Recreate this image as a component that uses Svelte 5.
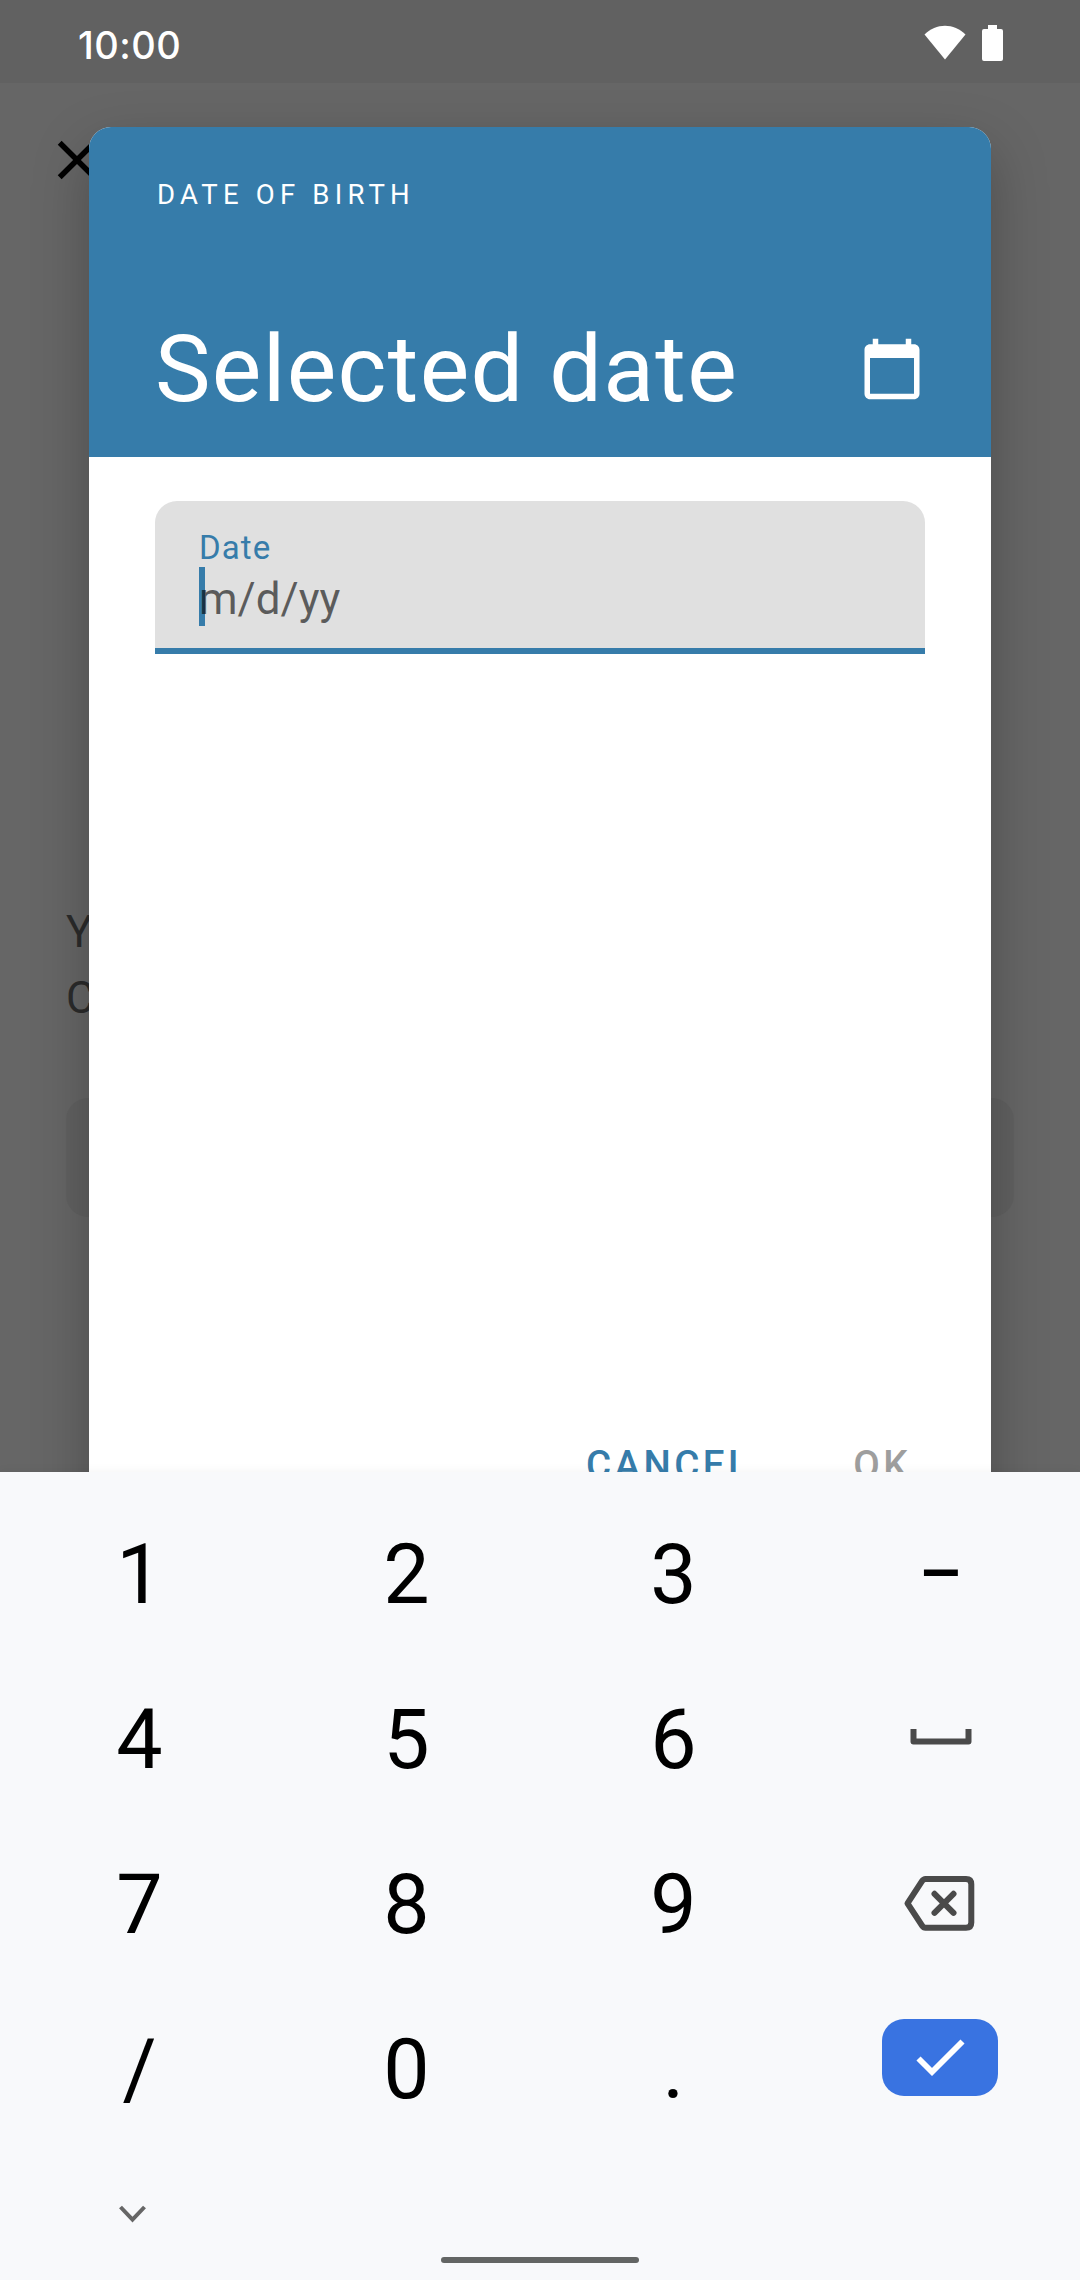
<script>
  const rows = [
    ['1', '2', '3', 'dash'],
    ['4', '5', '6', 'space'],
    ['7', '8', '9', 'backspace'],
    ['/', '0', '.', 'done']
  ];
</script>

<div class="screen">
  <header class="status">
    <span class="time">10:00</span>
    <svg class="wifi" width="42" height="36" viewBox="0 0 42 36"><path d="M0.5 9.5C12 -2.3 30 -2.3 41.5 9.5L21 34.5Z" /></svg>
    <svg class="battery" width="21" height="36" viewBox="0 0 21 36"><path d="M6 0h9v4h4a2 2 0 0 1 2 2v28a2 2 0 0 1-2 2H2a2 2 0 0 1-2-2V6a2 2 0 0 1 2-2h4z" /></svg>
  </header>

  <main class="page">
    <svg class="close" width="66" height="66" viewBox="0 0 24 24"><path d="M19 6.41L17.59 5 12 10.59 6.41 5 5 6.41 10.59 12 5 17.59 6.41 19 12 13.41 17.59 19 19 17.59 13.41 12z" /></svg>
    <p class="copy">Y<br />C</p>
    <div class="input-bg"></div>
  </main>

  <section class="dialog">
    <div class="head">
      <div class="overline">DATE OF BIRTH</div>
      <div class="title-row">
        <h1>Selected date</h1>
        <svg width="66" height="66" viewBox="0 0 24 24"><path d="M20 3h-1V1h-2v2H7V1H5v2H4c-1.1 0-2 .9-2 2v16c0 1.1.9 2 2 2h16c1.1 0 2-.9 2-2V5c0-1.1-.9-2-2-2zm0 18H4V8h16v13z" /></svg>
      </div>
    </div>
    <div class="field">
      <div class="label">Date</div>
      <div class="value"><i class="caret"></i><span class="hint">m/d/yy</span></div>
    </div>
    <div class="actions">
      <span class="cancel">CANCEL</span>
      <span class="ok">OK</span>
    </div>
  </section>

  <section class="keyboard">
    <div class="keys">
      {#each rows as row}
        {#each row as key}
          <div class="key">
            {#if key === 'dash'}
              <span class="dash">–</span>
            {:else if key === 'space'}
              <svg width="267" height="165" viewBox="0 0 267 165"><path class="stroke" d="M106.5 72V84.500H161.500V72" /></svg>
            {:else if key === 'backspace'}
              <svg width="267" height="165" viewBox="0 0 267 165"><path class="stroke" d="M118.500 57H159Q164.300 57 164.300 62.300V100.400Q164.300 105.700 159 105.700H118.500Q116.500 105.700 115 103.500L100.500 81.350L115 59.200Q116.500 57 118.500 57Z" /><path class="stroke" d="M127.500 71.800L146.500 90.800M146.500 71.800L127.500 90.800" stroke-linecap="round" /></svg>
            {:else if key === 'done'}
              <span class="done"><svg width="116" height="77" viewBox="0 0 116 77"><path d="M36.500 39.500L50 53L80.500 22.500" /></svg></span>
            {:else}
              {key}
            {/if}
          </div>
        {/each}
      {/each}
    </div>
    <div class="nav">
      <svg class="chevron" width="28" height="18" viewBox="0 0 28 18"><path d="M1.500 2L13.500 14.700L25.500 2" /></svg>
      <div class="pill"></div>
    </div>
  </section>
</div>

<style>
  :global(body) {
    margin: 0;
  }
  .screen {
    position: relative;
    width: 1080px;
    height: 2280px;
    overflow: hidden;
    background: #666;
    font-family: Roboto, sans-serif;
  }
  .status {
    display: flex;
    align-items: flex-start;
    box-sizing: border-box;
    height: 83px;
    padding: 25px 77px 0 78px;
    background: #616161;
  }
  .status svg {
    fill: #fff;
  }
  .time {
    flex: 1;
    color: #fff;
    font: 500 38px/40px Inter, sans-serif;
    letter-spacing: 0.5px;
  }
  .wifi {
    margin-right: 16px;
  }
  .page {
    padding: 44px 66px 0 44px;
  }
  .close {
    display: block;
  }
  .copy {
    margin: 706px 0 0 22px;
    color: #2b2b2b;
    font-size: 44px;
    line-height: 66px;
    letter-spacing: 1px;
  }
  .input-bg {
    height: 119px;
    margin: 67px 0 0 22px;
    border-radius: 22px;
    background: #616161;
  }
  .dialog {
    position: absolute;
    top: 127px;
    left: 89px;
    width: 902px;
    height: 1408px;
    border-radius: 22px;
    background: #fff;
    box-shadow: 0 22px 56px rgba(0, 0, 0, 0.26);
  }
  .head {
    box-sizing: border-box;
    height: 330px;
    padding: 50px 66px 0;
    border-radius: 22px 22px 0 0;
    background: #367caa;
    color: #fff;
  }
  .overline {
    padding-left: 2px;
    font-size: 27.5px;
    line-height: 36px;
    letter-spacing: 5.2px;
  }
  .title-row {
    display: flex;
    align-items: center;
    justify-content: space-between;
    height: 110px;
    margin-top: 101px;
  }
  h1 {
    margin: 0;
    font-size: 93.5px;
    font-weight: 400;
    line-height: 110px;
    letter-spacing: 1.3px;
  }
  .title-row svg {
    fill: #fff;
  }
  .field {
    box-sizing: border-box;
    height: 153px;
    margin: 44px 66px 0;
    padding: 27px 44px 0;
    border-bottom: 6px solid #367caa;
    border-radius: 22px 22px 0 0;
    background: #e0e0e0;
  }
  .label {
    color: #367caa;
    font-size: 33px;
    line-height: 39px;
    letter-spacing: 1.1px;
  }
  .value {
    display: flex;
    height: 59px;
  }
  .caret {
    width: 6px;
    height: 59px;
    margin-right: -6px;
    background: #367caa;
  }
  .hint {
    position: relative;
    color: rgba(0, 0, 0, 0.6);
    font-size: 44px;
    line-height: 64px;
  }
  .actions {
    display: flex;
    justify-content: flex-end;
    gap: 101px;
    margin-top: 787px;
    padding-right: 80px;
    font-size: 38.5px;
    font-weight: 500;
    line-height: 48px;
    letter-spacing: 3.44px;
  }
  .cancel {
    color: #367caa;
  }
  .ok {
    color: #9e9e9e;
  }
  .keyboard {
    position: absolute;
    left: 0;
    bottom: 0;
    width: 1080px;
    height: 808px;
    background: #f8f9fb;
    box-shadow: 0 0 10px rgba(0, 0, 0, 0.06);
  }
  .keys {
    display: grid;
    grid-template-columns: repeat(4, 267px);
    grid-auto-rows: 165px;
    padding: 20px 6px 0;
    color: #000;
    font-size: 82.5px;
    line-height: 165px;
  }
  .key {
    display: flex;
    justify-content: center;
  }
  .dash {
    font-size: 68px;
    font-weight: 500;
  }
  .stroke {
    fill: none;
    stroke: #4a4a4a;
    stroke-width: 6;
    stroke-linejoin: round;
  }
  .done {
    width: 116px;
    height: 77px;
    margin: 32px 1px 0 0;
    border-radius: 22px;
    background: #3973e1;
  }
  .done svg {
    display: block;
    fill: none;
    stroke: #fff;
    stroke-width: 5.8;
  }
  .nav {
    display: grid;
    grid-template-columns: 441px 198px;
    height: 128px;
  }
  .chevron {
    margin: 53px 0 0 119px;
    fill: none;
    stroke: #666;
    stroke-width: 4;
  }
  .pill {
    height: 6px;
    margin-top: 105px;
    border-radius: 3px;
    background: #636564;
  }
</style>
